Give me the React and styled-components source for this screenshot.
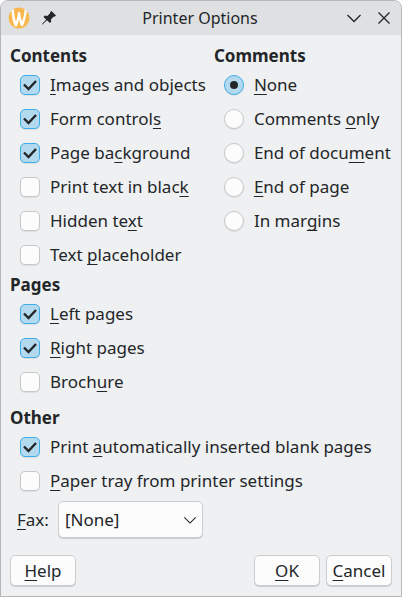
import React, { useState } from "react";
import styled, { createGlobalStyle, css } from "styled-components";

const GlobalStyle = createGlobalStyle`
  * {
    box-sizing: border-box;
  }
  body {
    margin: 0;
    background: #fff;
    color: #232629;
    font-family: "Noto Sans", sans-serif;
    font-size: 17px;
    line-height: 24px;
  }
`;

const Dialog = styled.form`
  min-height: 100vh;
  display: flex;
  flex-direction: column;
  background: #eff0f1;
  border: 1px solid #b5b6b8;
  border-radius: 8px 8px 0 0;
  overflow: hidden;
`;

const TitleBar = styled.header`
  display: grid;
  grid-template-columns: 1fr auto 1fr;
  align-items: center;
  height: 34px;
  padding: 0 9px 0 7px;
  background: #dee0e2;
`;

const Title = styled.h1`
  margin: 0;
  font-size: 16px;
  font-weight: 400;
`;

const TitleGroup = styled.div`
  display: flex;
  align-items: center;
  justify-content: ${(props) => (props.$end ? "flex-end" : "flex-start")};
  gap: ${(props) => (props.$end ? "14px" : "11px")};
`;

const TitleButton = styled.button`
  display: flex;
  padding: 0;
  border: 0;
  background: none;
  color: inherit;
`;

const Main = styled.main`
  padding: 8px 9px 0;
`;

const Columns = styled.div`
  display: grid;
  grid-template-columns: auto 1fr;
  column-gap: 8px;
`;

const Section = styled.fieldset`
  min-width: 0;
  margin: 0;
  padding: ${(props) => (props.$spaced ? "6px 0 0" : "0")};
  border: 0;
`;

const Heading = styled.legend`
  float: left;
  width: 100%;
  padding: 0;
  font-weight: 700;
  line-height: 25px;
`;

const Options = styled.div`
  clear: both;
  padding-left: 10px;
`;

const OptionLabel = styled.label`
  display: flex;
  align-items: center;
  gap: 10px;
  height: 34px;
  white-space: nowrap;
`;

const Key = styled.span`
  text-decoration: underline;
  text-decoration-thickness: 1px;
  text-decoration-skip-ink: none;
  text-underline-offset: 3px;
`;

const Mark = styled.span`
  display: grid;
  flex: none;

  > * {
    grid-area: 1 / 1;
  }

  svg {
    pointer-events: none;
  }
`;

const Input = styled.input`
  appearance: none;
  width: 20px;
  height: 20px;
  margin: 0;
  border: 1px solid #c5c7c9;
  border-radius: ${(props) => (props.type === "radio" ? "50%" : "5px")};
  background: #fcfcfc;
  box-shadow: 0 1px 1px #dcdddf;

  &:checked {
    border-color: #3daee9;
    background: #b3d9ef;
  }
`;

const raised = css`
  border: 1px solid #cbcdcf;
  border-radius: 5px;
  background: #fcfcfc;
  box-shadow: 0 1px 0 #cbcdcf;
  color: inherit;
  font: inherit;
`;

const FaxRow = styled.div`
  display: flex;
  align-items: center;
  gap: 9px;
  margin-top: 3px;
  padding-left: 7px;
`;

const SelectBox = styled.div`
  display: grid;
  align-items: center;
  width: 145px;

  > * {
    grid-area: 1 / 1;
  }

  svg {
    justify-self: end;
    margin-right: 6px;
    pointer-events: none;
  }
`;

const Select = styled.select`
  ${raised}
  appearance: none;
  width: 100%;
  height: 37px;
  padding: 0 28px 0 6px;
`;

const Footer = styled.footer`
  display: flex;
  gap: 6px;
  margin-top: auto;
  padding: 15px 9px 10px;
`;

const Button = styled.button`
  ${raised}
  width: 66px;
  height: 31px;
  padding: 0;
  margin-right: ${(props) => (props.$first ? "auto" : "0")};
`;

const WaylandLogo = () => (
  <svg width="22" height="22" viewBox="0 0 22 22" aria-hidden="true">
    <circle cx="11" cy="11" r="10.5" fill="#f8b84e" />
    <path
      d="M3.4 3.2L6 2.4C6.1 7 6.7 11.3 8 14.7C9.2 11.6 9.8 8 10.1 5L12.1 5C12.3 8.5 13 11.7 14.2 14.5C15.5 11 16.2 7 16.6 2.6L18.9 3.4C18.2 9.3 17 14.5 14.8 19L13 19C12 16.9 11.5 14.8 11.1 12.6C10.5 14.9 9.8 17.2 8.6 19.4L6.8 19.2C4.7 14.5 3.8 9 3.4 3.2Z"
      fill="#fff"
    />
  </svg>
);

const PinIcon = () => (
  <svg width="16" height="16" viewBox="0 0 16 16" aria-hidden="true">
    <path
      d="M10.4 1L15 5.4L13.6 6.8L12.8 6.5L9.9 9.4L10.2 11.8L8.9 13L6 10.3L1.8 14.3L1 14.7L1.3 13.8L5.2 9.5L2.5 6.9L3.8 5.6L6.4 5.9L9.3 3.1L9 2.3Z"
      fill="currentColor"
    />
  </svg>
);

const Chevron = ({ size = 16 }) => (
  <svg width={size} height={size} viewBox="0 0 16 16" fill="none" aria-hidden="true">
    <path d="M1.5 5L8 11.5L14.5 5" stroke="currentColor" strokeWidth="1.3" />
  </svg>
);

const CloseIcon = () => (
  <svg width="16" height="16" viewBox="0 0 16 16" fill="none" aria-hidden="true">
    <path d="M2.5 2.5L13.5 13.5M13.5 2.5L2.5 13.5" stroke="currentColor" strokeWidth="1.3" />
  </svg>
);

// "_" stands before the letter used as the keyboard shortcut
const Mnemonic = ({ text }) => {
  const [before, after] = text.split("_");
  return (
    <span>
      {before}
      <Key>{after[0]}</Key>
      {after.slice(1)}
    </span>
  );
};

const contents = [
  { text: "_Images and objects", checked: true },
  { text: "Form control_s", checked: true },
  { text: "Page ba_ckground", checked: true },
  { text: "Print text in blac_k" },
  { text: "Hidden te_xt" },
  { text: "Text _placeholder" },
];

const comments = ["_None", "Comments _only", "End of docu_ment", "_End of page", "In mar_gins"];

const pages = [
  { text: "_Left pages", checked: true },
  { text: "_Right pages", checked: true },
  { text: "Broch_ure" },
];

const other = [
  { text: "Print _automatically inserted blank pages", checked: true },
  { text: "_Paper tray from printer settings" },
];

const CheckOption = ({ text, checked = false }) => {
  const [on, setOn] = useState(checked);
  return (
    <OptionLabel>
      <Mark>
        <Input type="checkbox" checked={on} onChange={() => setOn(!on)} />
        {on && (
          <svg width="20" height="20" viewBox="0 0 20 20" fill="none" aria-hidden="true">
            <path d="M4 9.5L8.5 14L16 6" stroke="#232629" strokeWidth="2.4" />
          </svg>
        )}
      </Mark>
      <Mnemonic text={text} />
    </OptionLabel>
  );
};

const CheckSection = ({ title, items, spaced }) => (
  <Section $spaced={spaced}>
    <Heading>{title}</Heading>
    <Options>
      {items.map((item) => (
        <CheckOption key={item.text} {...item} />
      ))}
    </Options>
  </Section>
);

const CommentsSection = () => {
  const [selected, setSelected] = useState(comments[0]);
  return (
    <Section>
      <Heading>Comments</Heading>
      <Options>
        {comments.map((text) => (
          <OptionLabel key={text}>
            <Mark>
              <Input
                type="radio"
                name="comments"
                checked={selected === text}
                onChange={() => setSelected(text)}
              />
              {selected === text && (
                <svg width="20" height="20" viewBox="0 0 20 20" aria-hidden="true">
                  <circle cx="10" cy="10" r="4" fill="#232629" />
                </svg>
              )}
            </Mark>
            <Mnemonic text={text} />
          </OptionLabel>
        ))}
      </Options>
    </Section>
  );
};

const App = () => (
  <>
    <GlobalStyle />
    <Dialog onSubmit={(e) => e.preventDefault()}>
      <TitleBar>
        <TitleGroup>
          <WaylandLogo />
          <TitleButton type="button" aria-label="Keep above">
            <PinIcon />
          </TitleButton>
        </TitleGroup>
        <Title>Printer Options</Title>
        <TitleGroup $end>
          <TitleButton type="button" aria-label="Minimize">
            <Chevron />
          </TitleButton>
          <TitleButton type="button" aria-label="Close">
            <CloseIcon />
          </TitleButton>
        </TitleGroup>
      </TitleBar>
      <Main>
        <Columns>
          <CheckSection title="Contents" items={contents} />
          <CommentsSection />
        </Columns>
        <CheckSection title="Pages" items={pages} />
        <CheckSection title="Other" items={other} spaced />
        <FaxRow>
          <label htmlFor="fax">
            <Mnemonic text="_Fax:" />
          </label>
          <SelectBox>
            <Select id="fax" defaultValue="none">
              <option value="none">[None]</option>
            </Select>
            <Chevron size={14} />
          </SelectBox>
        </FaxRow>
      </Main>
      <Footer>
        <Button type="button" $first>
          <Mnemonic text="_Help" />
        </Button>
        <Button type="submit">
          <Mnemonic text="_OK" />
        </Button>
        <Button type="button">
          <Mnemonic text="_Cancel" />
        </Button>
      </Footer>
    </Dialog>
  </>
);

export default App;
